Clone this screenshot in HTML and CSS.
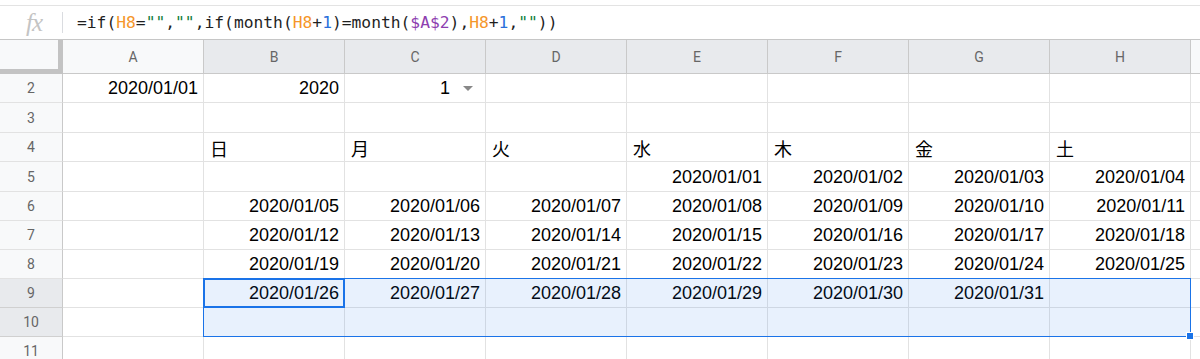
FILE: index.html
```html
<!DOCTYPE html>
<html lang="ja">
<head>
<meta charset="utf-8">
<title>Sheet</title>
<link rel="stylesheet" href="styles.css">
</head>
<body>
<div class="formula-bar">
  <span class="fx">fx</span>
  <span class="sep"></span>
  <span class="formula">=if(<span class="ref-o">H8</span>=<span class="str">""</span>,<span class="str">""</span>,if(month(<span class="ref-o">H8</span>+<span class="num">1</span>)=month(<span class="ref-p">$A$2</span>),<span class="ref-o">H8</span>+<span class="num">1</span>,<span class="str">""</span>))</span>
</div>
<div class="sheet">
  <div class="corner"></div>
  <div class="ch">A</div><div class="ch sel">B</div><div class="ch sel">C</div><div class="ch sel">D</div><div class="ch sel">E</div><div class="ch sel">F</div><div class="ch sel">G</div><div class="ch sel">H</div><div class="ch"></div>

  <div class="rh">2</div><div class="c">2020/01/01</div><div class="c">2020</div><div class="c dd">1<span class="arrow"></span></div><div class="c"></div><div class="c"></div><div class="c"></div><div class="c"></div><div class="c"></div><div class="c"></div>

  <div class="rh">3</div><div class="c"></div><div class="c"></div><div class="c"></div><div class="c"></div><div class="c"></div><div class="c"></div><div class="c"></div><div class="c"></div><div class="c"></div>

  <div class="rh">4</div><div class="c"></div><div class="c l">日</div><div class="c l">月</div><div class="c l">火</div><div class="c l">水</div><div class="c l">木</div><div class="c l">金</div><div class="c l">土</div><div class="c"></div>

  <div class="rh">5</div><div class="c"></div><div class="c"></div><div class="c"></div><div class="c"></div><div class="c">2020/01/01</div><div class="c">2020/01/02</div><div class="c">2020/01/03</div><div class="c">2020/01/04</div><div class="c"></div>

  <div class="rh">6</div><div class="c"></div><div class="c">2020/01/05</div><div class="c">2020/01/06</div><div class="c">2020/01/07</div><div class="c">2020/01/08</div><div class="c">2020/01/09</div><div class="c">2020/01/10</div><div class="c">2020/01/11</div><div class="c"></div>

  <div class="rh">7</div><div class="c"></div><div class="c">2020/01/12</div><div class="c">2020/01/13</div><div class="c">2020/01/14</div><div class="c">2020/01/15</div><div class="c">2020/01/16</div><div class="c">2020/01/17</div><div class="c">2020/01/18</div><div class="c"></div>

  <div class="rh">8</div><div class="c"></div><div class="c">2020/01/19</div><div class="c">2020/01/20</div><div class="c">2020/01/21</div><div class="c">2020/01/22</div><div class="c">2020/01/23</div><div class="c">2020/01/24</div><div class="c">2020/01/25</div><div class="c"></div>

  <div class="rh sel">9</div><div class="c"></div><div class="c">2020/01/26</div><div class="c">2020/01/27</div><div class="c">2020/01/28</div><div class="c">2020/01/29</div><div class="c">2020/01/30</div><div class="c">2020/01/31</div><div class="c"></div><div class="c"></div>

  <div class="rh sel">10</div><div class="c"></div><div class="c"></div><div class="c"></div><div class="c"></div><div class="c"></div><div class="c"></div><div class="c"></div><div class="c"></div><div class="c"></div>

  <div class="rh">11</div><div class="c"></div><div class="c"></div><div class="c"></div><div class="c"></div><div class="c"></div><div class="c"></div><div class="c"></div><div class="c"></div><div class="c"></div>

  <div class="selection"></div>
  <div class="active"></div>
  <div class="handle"></div>
</div>
</body>
</html>
```
FILE: styles.css
```css
* { box-sizing: border-box; }
html, body { margin: 0; padding: 0; background: #fff; overflow: hidden; }
body { width: 1200px; height: 359px; }

.formula-bar {
  margin-top: 5px;
  height: 35px;
  border-top: 1px solid #e3e3e3;
  border-bottom: 1px solid #c6c6c6;
  display: flex;
  align-items: center;
}
.fx {
  width: 63px;
  text-align: center;
  padding-left: 5px;
  font-family: "Liberation Serif", serif;
  font-style: italic;
  font-size: 25px;
  color: #c4c4c4;
  letter-spacing: -1px;
}
.sep {
  width: 1px;
  height: 21px;
  background: #dadce0;
  margin-left: -1px;
}
.formula {
  margin-left: 14px;
  font-family: "DejaVu Sans Mono", "Liberation Mono", monospace;
  font-size: 16.3px;
  color: #1f1f1f;
  white-space: pre;
}
.ref-o { color: #f5962a; }
.num { color: #2a6fdb; }
.str { color: #0d7d3a; }
.ref-p { color: #8e3fb0; }

.sheet {
  position: relative;
  display: grid;
  grid-template-columns: 63px repeat(8, 141px) 1fr;
  grid-template-rows: 34px 29px 30px 29px 30px 29px 29px 29px 29px 29px 29px;
}
.corner {
  background: #f8f9fa;
  border-right: 5px solid #c3c3c3;
  border-bottom: 5px solid #c3c3c3;
}
.ch {
  background: #f8f9fa;
  border-right: 1px solid #c9c9c9;
  border-bottom: 1px solid #c9c9c9;
  display: flex;
  align-items: center;
  justify-content: center;
  font-family: Roboto, "Liberation Sans", sans-serif;
  font-size: 14px;
  color: #666;
}
.ch.sel { background: #e8eaed; }
.rh {
  background: #f8f9fa;
  border-right: 1px solid #c9c9c9;
  border-bottom: 1px solid #e2e2e2;
  display: flex;
  align-items: center;
  justify-content: center;
  font-family: Roboto, "Liberation Sans", sans-serif;
  font-size: 14px;
  color: #666;
}
.rh.sel { background: #e8eaed; border-bottom-color: #d0d0d0; }
.c {
  border-right: 1px solid #e2e2e2;
  border-bottom: 1px solid #e2e2e2;
  display: flex;
  align-items: center;
  justify-content: flex-end;
  padding: 1px 5px 0 4px;
  font-family: "Liberation Sans", "Noto Sans CJK JP", sans-serif;
  font-size: 18px;
  color: #000;
  white-space: nowrap;
  overflow: hidden;
}
.c.l { justify-content: flex-start; padding-left: 6px; }
.c.dd { padding-right: 12px; }
.arrow {
  margin-left: 13px;
  width: 0;
  height: 0;
  border-left: 5px solid transparent;
  border-right: 5px solid transparent;
  border-top: 5px solid #888;
}

.selection {
  position: absolute;
  left: 203px;
  top: 238px;
  width: 988px;
  height: 59px;
  border: 1px solid #1a73e8;
  background: rgba(26, 115, 232, 0.1);
}
.active {
  position: absolute;
  left: 203px;
  top: 238px;
  width: 142px;
  height: 30px;
  border: 2px solid #1a73e8;
}
.handle {
  position: absolute;
  left: 1186px;
  top: 292px;
  width: 8px;
  height: 8px;
  background: #1a73e8;
  border: 1px solid #fff;
}
```
